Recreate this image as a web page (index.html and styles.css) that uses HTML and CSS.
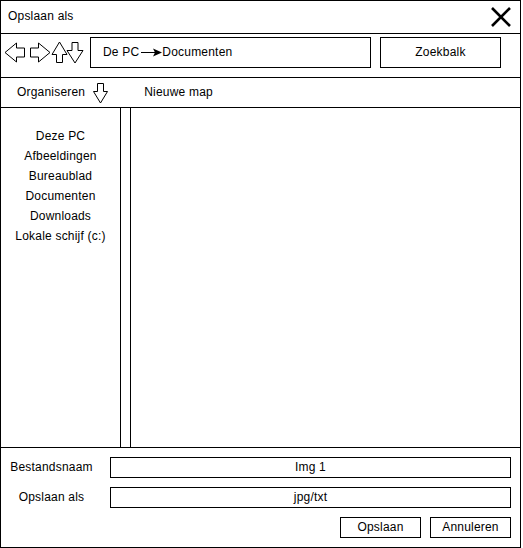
FILE: index.html
```html
<!DOCTYPE html>
<html lang="nl">
<head>
<meta charset="utf-8">
<title>Opslaan als</title>
<link rel="stylesheet" href="styles.css">
</head>
<body>
<div class="window">
  <div class="titlebar">
    <span class="title">Opslaan als</span>
    <svg class="close" width="22" height="22" viewBox="0 0 22 22"><path d="M2 2 L20 20 M20 2 L2 20" stroke="#000" stroke-width="2.6" fill="none"/></svg>
  </div>
  <div class="navrow">
    <svg class="navarrows" width="89" height="43" viewBox="1 34 89 43">
      <g fill="#fff" stroke="#000" stroke-width="1">
        <polygon points="5,52.5 16.5,43 16.5,48 24.5,48 24.5,57 16.5,57 16.5,62"/>
        <polygon points="50,52.5 38.5,43 38.5,48 30.5,48 30.5,57 38.5,57 38.5,62"/>
        <polygon points="59.5,42 67,54.5 62.5,54.5 62.5,62.5 56.5,62.5 56.5,54.5 52,54.5"/>
        <polygon points="72,42.5 78,42.5 78,50.5 83,50.5 75,63 67,50.5 72,50.5"/>
      </g>
    </svg>
    <div class="address">
      <span>De PC</span>
      <svg class="crumb-arrow" width="22" height="9" viewBox="0 0 22 9"><path d="M1 4.5 H15" stroke="#000" stroke-width="1"/><path d="M22 4.5 L13 0.5 L15 4.5 L13 8.5 Z" fill="#000"/></svg>
      <span>Documenten</span>
    </div>
    <div class="search">Zoekbalk</div>
  </div>
  <div class="toolbar">
    <span>Organiseren</span>
    <svg class="org-arrow" width="15" height="21" viewBox="0 0 15 21"><polygon points="4.5,0.5 10.5,0.5 10.5,8.5 14.5,8.5 7.5,20 0.5,8.5 4.5,8.5" fill="#fff" stroke="#000" stroke-width="1"/></svg>
    <span class="newfolder">Nieuwe map</span>
  </div>
  <div class="main">
    <ul class="sidebar">
      <li>Deze PC</li>
      <li>Afbeeldingen</li>
      <li>Bureaublad</li>
      <li>Documenten</li>
      <li>Downloads</li>
      <li>Lokale schijf (c:)</li>
    </ul>
    <div class="splitter"></div>
    <div class="content"></div>
  </div>
  <div class="footer">
    <div class="field">
      <span class="label">Bestandsnaam</span>
      <div class="input">Img 1</div>
    </div>
    <div class="field">
      <span class="label">Opslaan als</span>
      <div class="input">jpg/txt</div>
    </div>
    <div class="buttons">
      <div class="btn">Opslaan</div>
      <div class="btn">Annuleren</div>
    </div>
  </div>
</div>
</body>
</html>
```

FILE: styles.css
```css
* { box-sizing: border-box; }
html, body { margin: 0; padding: 0; background: #fff; }
body {
  font-family: "Liberation Sans", Arial, sans-serif;
  font-size: 12px;
  letter-spacing: 0.2px;
  color: #000;
}
.window {
  width: 521px;
  height: 548px;
  border: 1px solid #000;
  display: flex;
  flex-direction: column;
}
.titlebar {
  height: 33px;
  border-bottom: 1px solid #000;
  display: flex;
  align-items: center;
  justify-content: space-between;
  padding: 0 8px 2px 7px;
  flex: none;
}
.close { display: block; margin-top: 2px; }
.navrow {
  height: 44px;
  border-bottom: 1px solid #000;
  display: flex;
  align-items: flex-start;
  flex: none;
}
.navarrows { display: block; flex: none; }
.address {
  margin-top: 3px;
  width: 281px;
  height: 31px;
  border: 1px solid #000;
  display: flex;
  align-items: center;
  padding: 0 0 2px 12px;
}
.crumb-arrow { display: block; margin: 2px 0 0 1px; }
.search {
  margin-top: 3px;
  margin-left: 9px;
  width: 121px;
  height: 31px;
  border: 1px solid #000;
  display: flex;
  align-items: center;
  justify-content: center;
  padding-bottom: 2px;
}
.toolbar {
  height: 30px;
  border-bottom: 1px solid #000;
  display: flex;
  align-items: center;
  padding: 0 0 2px 16px;
  flex: none;
}
.org-arrow { display: block; margin-left: 8px; margin-top: 4px; }
.newfolder { margin-left: 36px; }
.main {
  height: 340px;
  border-bottom: 1px solid #000;
  display: flex;
  flex: none;
}
.sidebar {
  list-style: none;
  margin: 0;
  padding: 18px 0 0 0;
  width: 120px;
  border-right: 1px solid #000;
  text-align: center;
  line-height: 20px;
}
.splitter {
  width: 10px;
  border-right: 1px solid #000;
}
.content { flex: 1; }
.footer {
  flex: 1;
  display: flex;
  flex-direction: column;
  gap: 9px;
  padding: 9px 9px 0 0;
}
.field {
  display: flex;
  align-items: center;
  height: 21px;
}
.label {
  width: 101px;
  text-align: center;
  margin-right: 8px;
  padding-bottom: 2px;
}
.input {
  flex: 1;
  height: 21px;
  border: 1px solid #000;
  display: flex;
  align-items: center;
  justify-content: center;
  padding-bottom: 2px;
}
.buttons {
  display: flex;
  justify-content: flex-end;
  gap: 9px;
}
.btn {
  width: 81px;
  height: 21px;
  border: 1px solid #000;
  display: flex;
  align-items: center;
  justify-content: center;
  padding-bottom: 2px;
}
```
